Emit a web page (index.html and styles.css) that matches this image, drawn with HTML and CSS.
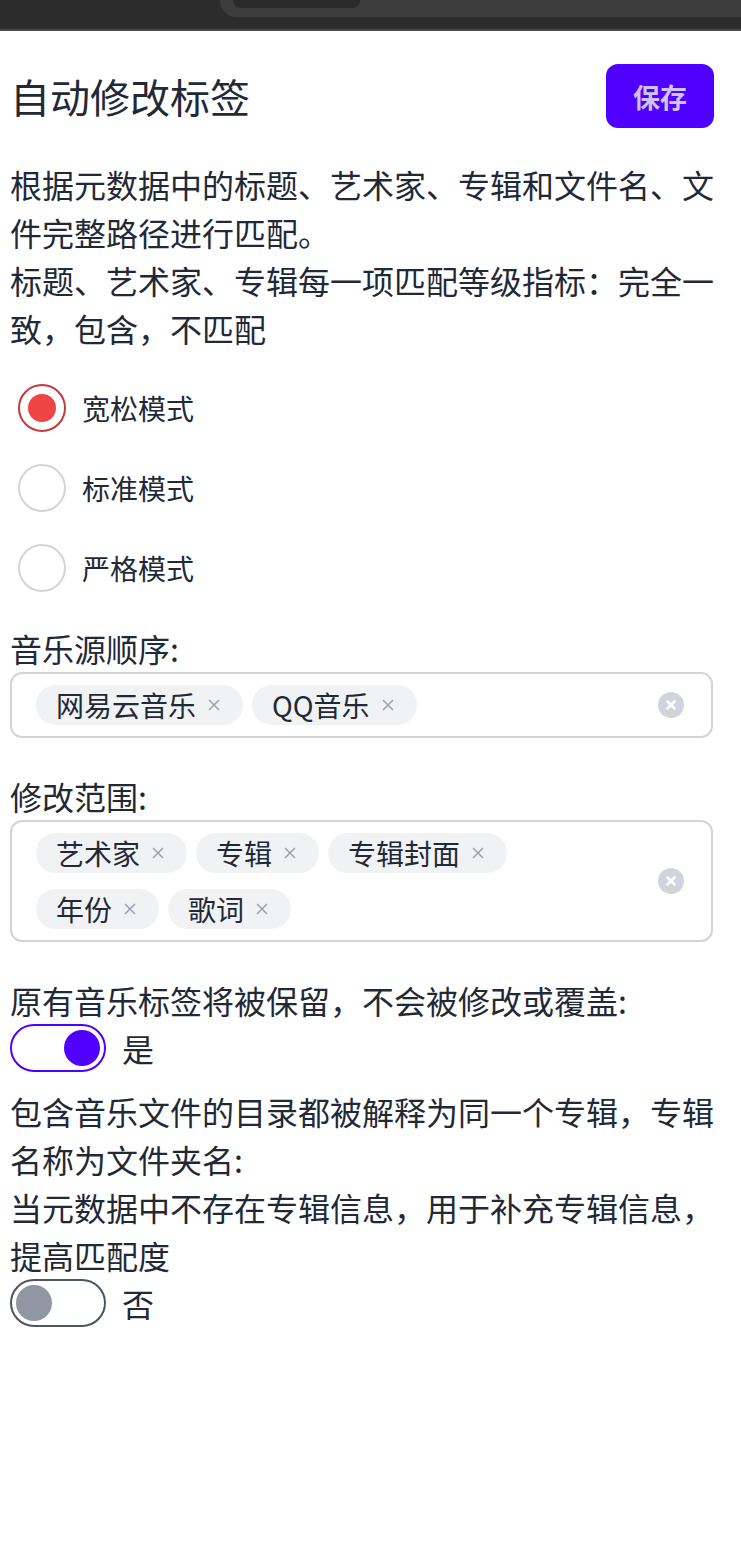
FILE: index.html
```html
<!DOCTYPE html>
<html lang="zh">
<head>
<meta charset="utf-8">
<link rel="stylesheet" href="styles.css">
</head>
<body>
<div class="topbar">
  <div class="tab"><div class="tab-inner"></div></div>
</div>
<main class="page">
  <div class="header">
    <h1 class="title">自动修改标签</h1>
    <button class="save">保存</button>
  </div>
  <p class="desc">根据元数据中的标题、艺术家、专辑和文件名、文件完整路径进行匹配。<br>标题、艺术家、专辑每一项匹配等级指标：完全一致，包含，不匹配</p>
  <div class="radios">
    <div class="radio-row"><span class="radio checked"><span class="dot"></span></span><span class="radio-label">宽松模式</span></div>
    <div class="radio-row"><span class="radio"></span><span class="radio-label">标准模式</span></div>
    <div class="radio-row"><span class="radio"></span><span class="radio-label">严格模式</span></div>
  </div>
  <div class="label first">音乐源顺序:</div>
  <div class="select">
    <div class="tags">
      <span class="tag">网易云音乐<svg class="tx" viewBox="0 0 14 14"><path d="M2 2L12 12M12 2L2 12"/></svg></span>
      <span class="tag">QQ音乐<svg class="tx" viewBox="0 0 14 14"><path d="M2 2L12 12M12 2L2 12"/></svg></span>
    </div>
    <svg class="clear" viewBox="0 0 26 26"><circle cx="13" cy="13" r="13"/><path d="M9.5 9.5L16.5 16.5M16.5 9.5L9.5 16.5"/></svg>
  </div>
  <div class="label">修改范围:</div>
  <div class="select">
    <div class="tags">
      <span class="tag">艺术家<svg class="tx" viewBox="0 0 14 14"><path d="M2 2L12 12M12 2L2 12"/></svg></span>
      <span class="tag">专辑<svg class="tx" viewBox="0 0 14 14"><path d="M2 2L12 12M12 2L2 12"/></svg></span>
      <span class="tag">专辑封面<svg class="tx" viewBox="0 0 14 14"><path d="M2 2L12 12M12 2L2 12"/></svg></span>
      <span class="tag">年份<svg class="tx" viewBox="0 0 14 14"><path d="M2 2L12 12M12 2L2 12"/></svg></span>
      <span class="tag">歌词<svg class="tx" viewBox="0 0 14 14"><path d="M2 2L12 12M12 2L2 12"/></svg></span>
    </div>
    <svg class="clear" viewBox="0 0 26 26"><circle cx="13" cy="13" r="13"/><path d="M9.5 9.5L16.5 16.5M16.5 9.5L9.5 16.5"/></svg>
  </div>
  <div class="option first-opt">
    <div class="text">原有音乐标签将被保留，不会被修改或覆盖:</div>
    <div class="toggle-row"><span class="toggle on"><span class="knob"></span></span><span class="toggle-label">是</span></div>
  </div>
  <div class="option">
    <div class="text">包含音乐文件的目录都被解释为同一个专辑，专辑名称为文件夹名:<br>当元数据中不存在专辑信息，用于补充专辑信息，提高匹配度</div>
    <div class="toggle-row"><span class="toggle"><span class="knob"></span></span><span class="toggle-label">否</span></div>
  </div>
</main>
</body>
</html>
```
FILE: styles.css
```css
* { box-sizing: border-box; }
html, body { margin: 0; padding: 0; background: #fff; }
body {
  font-family: "Noto Sans CJK SC", "Noto Sans", sans-serif;
  color: #1f2937;
  width: 741px;
}
.topbar {
  height: 31px;
  background: #2c2c2c;
  border-bottom: 2px solid #4a4a4a;
  padding-left: 220px;
  overflow: hidden;
}
.tab {
  height: 17px;
  background: #3d3d3d;
  border-bottom-left-radius: 16px;
  padding-left: 13px;
}
.tab-inner {
  width: 127px;
  height: 8px;
  background: #2a2a2a;
  border-bottom-left-radius: 8px;
  border-bottom-right-radius: 8px;
}
.page { padding: 0 27px 0 10px; }
.header {
  display: flex;
  justify-content: space-between;
  align-items: center;
  margin-top: 33px;
  height: 64px;
}
.title {
  margin: 0;
  font-size: 40px;
  font-weight: 400;
  line-height: 56px;
}
.save {
  width: 108px;
  height: 64px;
  border: none;
  border-radius: 12px;
  background: #4f00ff;
  color: #cfc2ff;
  font-family: inherit;
  font-size: 27px;
  font-weight: 700;
  padding: 0;
}
.desc {
  margin: 32px 0 0 0;
  font-size: 32px;
  line-height: 48px;
  width: 705px;
}
.radios { margin-top: 16px; }
.radio-row {
  display: flex;
  align-items: center;
  height: 80px;
  padding-left: 8px;
}
.radio {
  width: 48px;
  height: 48px;
  border-radius: 50%;
  border: 2px solid #d4d4d4;
  display: flex;
  align-items: center;
  justify-content: center;
  flex: none;
}
.radio.checked { border-color: #c53b3b; }
.dot {
  width: 28px;
  height: 28px;
  border-radius: 50%;
  background: #ef4444;
}
.radio-label {
  margin-left: 16px;
  font-size: 28px;
  line-height: 40px;
}
.label {
  font-size: 32px;
  line-height: 48px;
  margin-top: 34px;
}
.label.first { margin-top: 16px; }
.select {
  width: 703px;
  border: 2px solid #d4d4d4;
  border-radius: 12px;
  display: flex;
  align-items: center;
  padding: 11px 27px 11px 24px;
}
.tags {
  flex: 1;
  display: flex;
  flex-wrap: wrap;
  gap: 16px 9px;
  max-width: 540px;
}
.tag {
  display: inline-flex;
  align-items: center;
  height: 40px;
  border-radius: 20px;
  background: #f1f2f4;
  padding: 0 22px 0 20px;
  font-size: 28px;
  line-height: 40px;
}
.tx {
  width: 14px;
  height: 14px;
  margin-left: 11px;
  fill: none;
  stroke: #9ca3af;
  stroke-width: 1.6;
}
.clear {
  width: 26px;
  height: 26px;
  flex: none;
  margin-left: auto;
}
.clear circle { fill: #d1d5db; }
.clear path { stroke: #fff; stroke-width: 2.6; stroke-linecap: round; fill: none; }
.option { margin-top: 15px; }
.option.first-opt { margin-top: 34px; }
.text {
  font-size: 32px;
  line-height: 48px;
  width: 705px;
}
.toggle-row {
  display: flex;
  align-items: center;
  height: 48px;
}
.toggle {
  width: 96px;
  height: 48px;
  border-radius: 24px;
  border: 2px solid #4b5563;
  display: flex;
  align-items: center;
  padding: 0 4px;
  flex: none;
}
.toggle .knob {
  width: 36px;
  height: 36px;
  border-radius: 50%;
  background: #9097a2;
}
.toggle.on { border-color: #4f00ff; justify-content: flex-end; }
.toggle.on .knob { background: #4f00ff; }
.toggle-label {
  margin-left: 16px;
  font-size: 32px;
  line-height: 48px;
}
```
